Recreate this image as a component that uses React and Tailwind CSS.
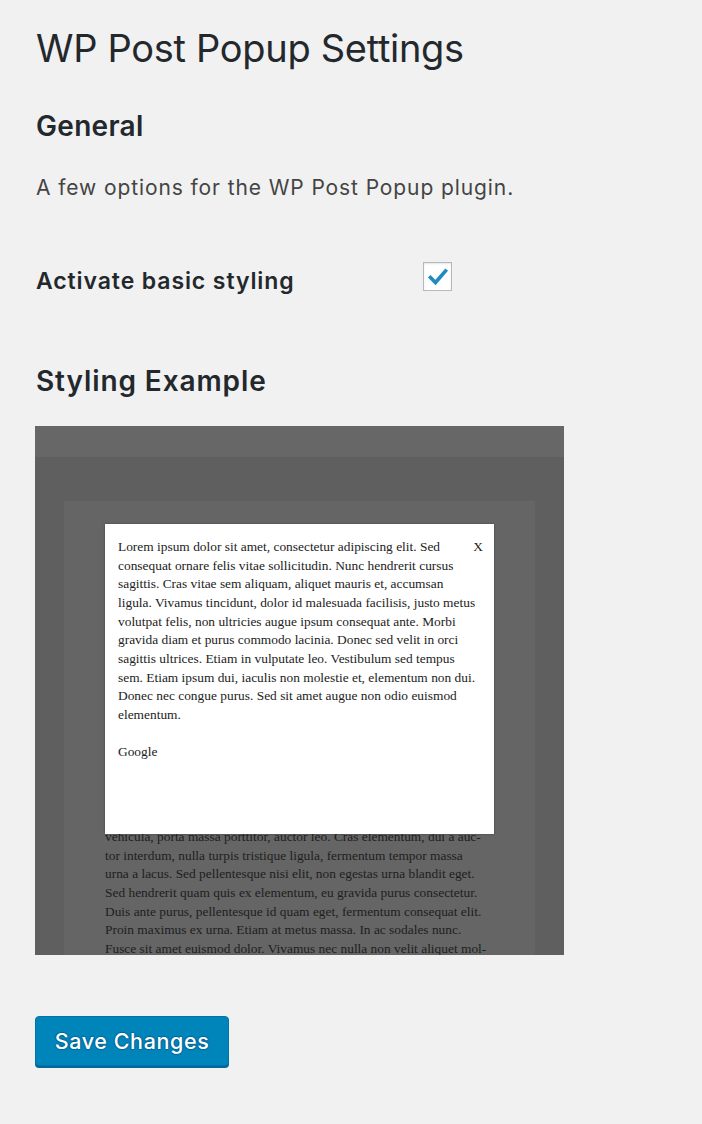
import React from "react";

const bgLines = [
  "vehicula, porta massa porttitor, auctor leo. Cras elementum, dui a auc-",
  "tor interdum, nulla turpis tristique ligula, fermentum tempor massa",
  "urna a lacus. Sed pellentesque nisi elit, non egestas urna blandit eget.",
  "Sed hendrerit quam quis ex elementum, eu gravida purus consectetur.",
  "Duis ante purus, pellentesque id quam eget, fermentum consequat elit.",
  "Proin maximus ex urna. Etiam at metus massa. In ac sodales nunc.",
  "Fusce sit amet euismod dolor. Vivamus nec nulla non velit aliquet mol-",
];

const popupLines = [
  "Lorem ipsum dolor sit amet, consectetur adipiscing elit. Sed",
  "consequat ornare felis vitae sollicitudin. Nunc hendrerit cursus",
  "sagittis. Cras vitae sem aliquam, aliquet mauris et, accumsan",
  "ligula. Vivamus tincidunt, dolor id malesuada facilisis, justo metus",
  "volutpat felis, non ultricies augue ipsum consequat ante. Morbi",
  "gravida diam et purus commodo lacinia. Donec sed velit in orci",
  "sagittis ultrices. Etiam in vulputate leo. Vestibulum sed tempus",
  "sem. Etiam ipsum dui, iaculis non molestie et, elementum non dui.",
  "Donec nec congue purus. Sed sit amet augue non odio euismod",
  "elementum.",
];

function StylingExample() {
  return (
    <div className="mt-[28px] -ml-px flex h-[529px] w-[529px] flex-col overflow-hidden bg-[#5f5f5f]">
      <div className="h-[31px] shrink-0 bg-[#676767]" />
      <div className="flex flex-1 px-[29px] pt-[44px]">
        <div className="relative flex-1 bg-[#656565] pl-[41px] pt-[327px] font-['Liberation_Serif',serif] text-[13.4px] leading-[18.65px] text-[#1e1e1e]">
          {bgLines.map((l) => (
            <div key={l} className="whitespace-nowrap">
              {l}
            </div>
          ))}
          <div className="absolute left-[41px] top-[23px] h-[310px] w-[389px] bg-white px-[13px] pt-[14px] text-[#222] shadow-[0_0_2px_rgba(0,0,0,0.35)]">
            <div className="absolute right-[11px] top-[14px]">X</div>
            {popupLines.map((l) => (
              <div key={l} className="whitespace-nowrap">
                {l}
              </div>
            ))}
            <div className="mt-[18.65px]">Google</div>
          </div>
        </div>
      </div>
    </div>
  );
}

export default function App() {
  return (
    <div className="min-h-[1124px] bg-[#f1f1f1] pb-[40px] pl-[36px] pt-[24px] font-['Inter',sans-serif] text-[#23282d]">
      <h1 className="text-[38px] font-normal leading-[48px] tracking-[-0.3px]">
        WP Post Popup Settings
      </h1>
      <h2 className="mt-[37px] text-[28px] font-semibold leading-[34px] tracking-[0.3px]">
        General
      </h2>
      <p className="mt-[31px] text-[21px] leading-[28px] tracking-[0.9px] text-[#444]">
        A few options for the WP Post Popup plugin.
      </p>
      <div className="mt-[60px] flex items-start">
        <div className="w-[387px] pt-[4px] text-[23px] font-semibold leading-[30px] tracking-[0.9px]">
          Activate basic styling
        </div>
        <div className="flex h-[29px] w-[29px] items-center justify-center border-[1.5px] border-[#b4b9be] bg-white shadow-[inset_0_1px_2px_rgba(0,0,0,0.1)]">
          <svg width="22" height="22" viewBox="0 0 22 22">
            <path
              d="M3.5 11.5 L8.5 16.5 L18.5 5"
              fill="none"
              stroke="#1e8cbe"
              strokeWidth="3.6"
              strokeLinecap="square"
              strokeLinejoin="miter"
            />
          </svg>
        </div>
      </div>
      <h2 className="mt-[68px] text-[28px] font-semibold leading-[34px] tracking-[0.9px]">
        Styling Example
      </h2>
      <StylingExample />
      <button className="mt-[61px] -ml-px h-[50px] w-[194px] rounded-[4px] border border-[#0073aa] bg-[#0085ba] text-[21.5px] font-medium tracking-[0.6px] text-white shadow-[0_2px_0_#006799] [text-shadow:0_-1px_1px_#006799,1px_0_1px_#006799,0_1px_1px_#006799,-1px_0_1px_#006799]">
        Save Changes
      </button>
    </div>
  );
}
